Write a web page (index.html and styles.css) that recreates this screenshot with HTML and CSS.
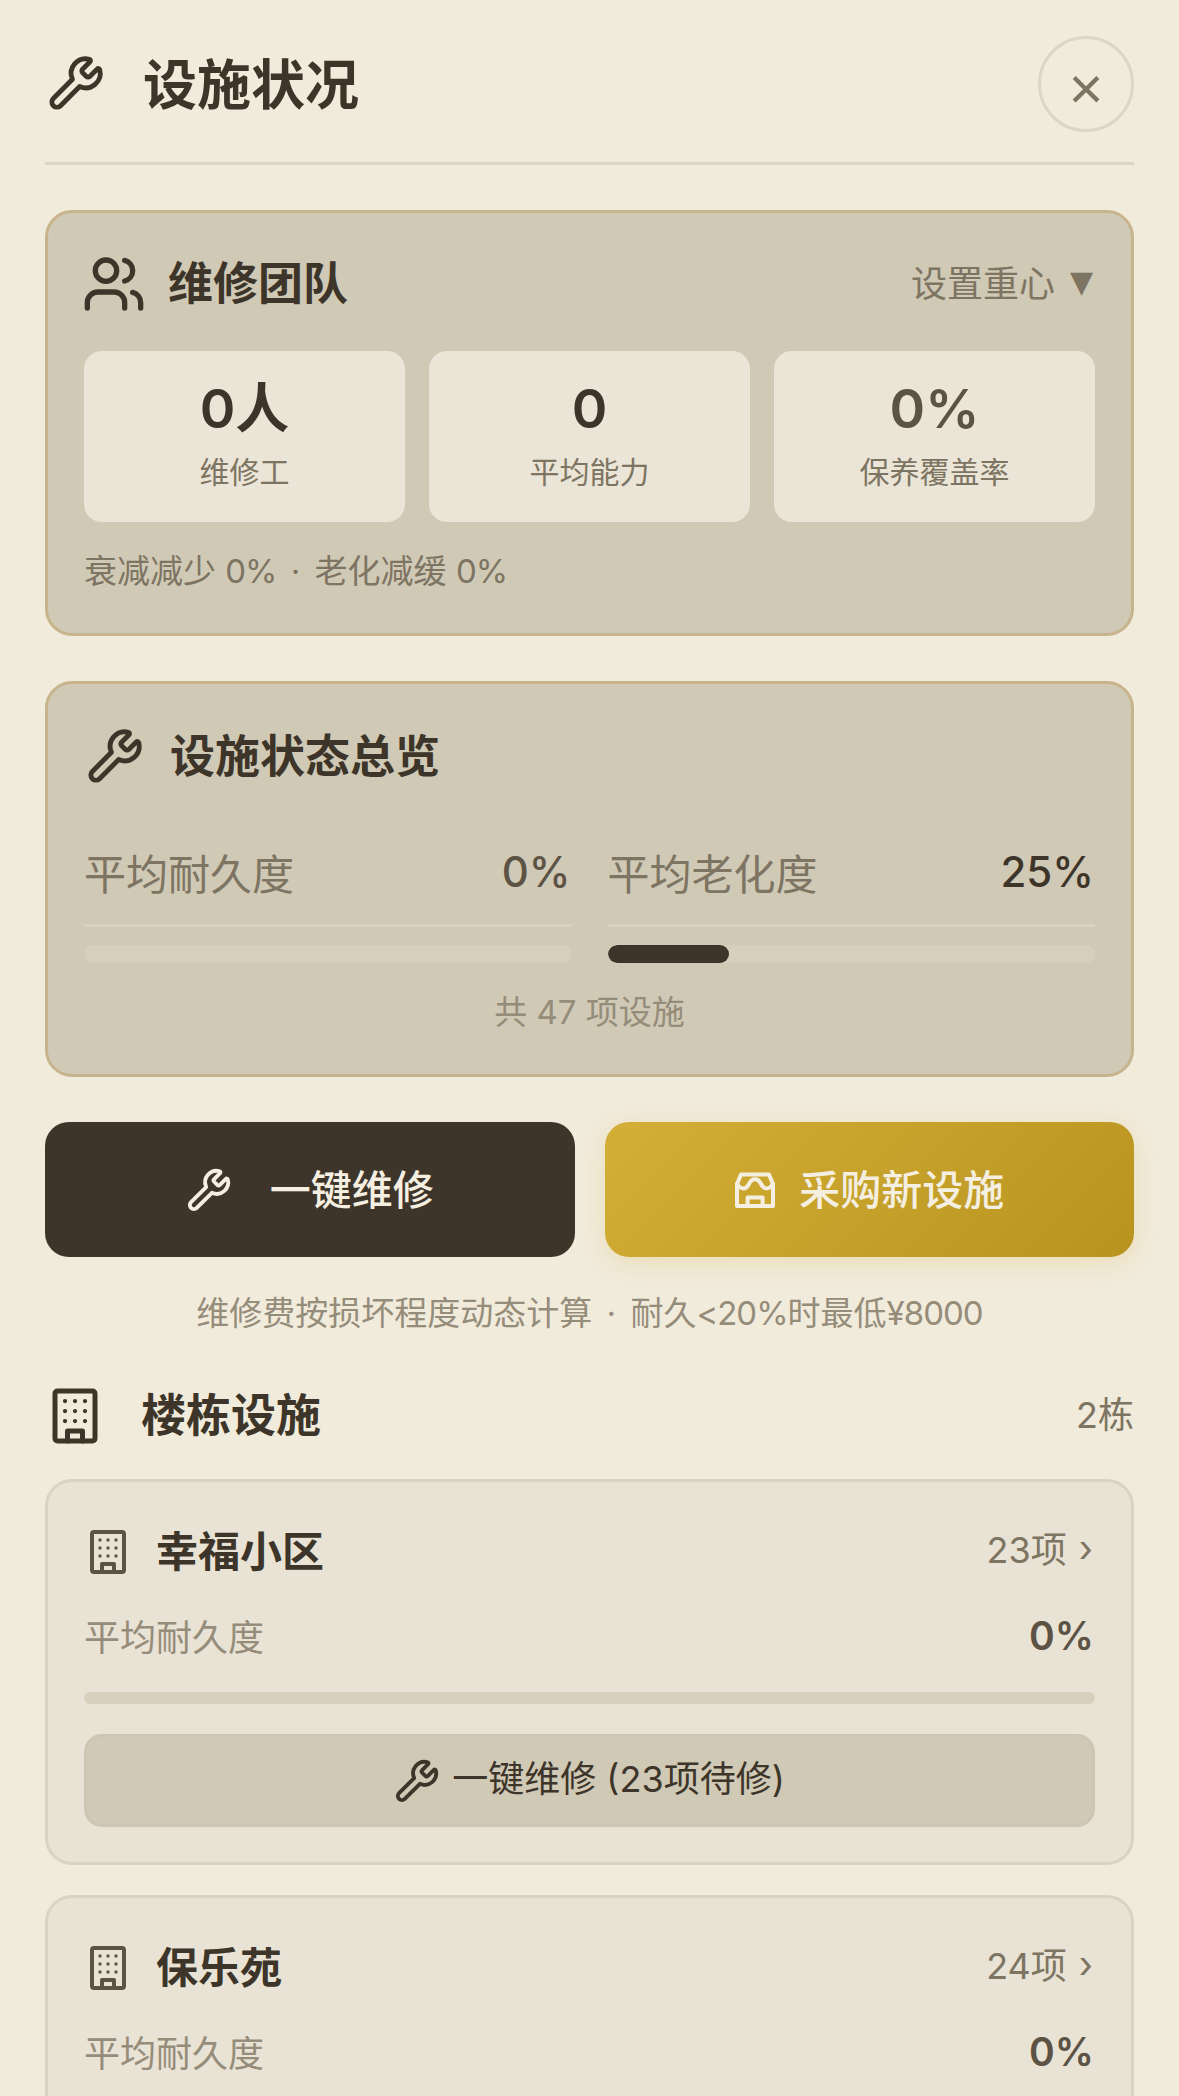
FILE: index.html
```html
<!DOCTYPE html>
<html lang="zh">
<head>
<meta charset="utf-8">
<title>设施状况</title>
<link rel="stylesheet" href="styles.css">
</head>
<body>
<svg class="defs" width="0" height="0">
  <symbol id="wrench" viewBox="0 0 24 24"><path d="M14.7 6.3a1 1 0 0 0 0 1.4l1.6 1.6a1 1 0 0 0 1.4 0l3.106-3.105c.32-.322.863-.22.983.218a6 6 0 0 1-8.259 7.057l-7.91 7.91a1 1 0 0 1-2.999-3l7.91-7.91a6 6 0 0 1 7.057-8.259c.438.12.54.662.219.984z"/></symbol>
  <symbol id="users" viewBox="0 0 24 24"><path d="M16 21v-2a4 4 0 0 0-4-4H6a4 4 0 0 0-4 4v2"/><circle cx="9" cy="7" r="4"/><path d="M22 21v-2a4 4 0 0 0-3-3.870"/><path d="M16 3.130a4 4 0 0 1 0 7.750"/></symbol>
  <symbol id="building" viewBox="0 0 24 24"><rect x="4" y="2" width="16" height="20" rx="1"/><path d="M9 22v-4h6v4"/><path class="dots" d="M8 6h.01M16 6h.01M12 6h.01M12 10h.01M12 14h.01M16 10h.01M16 14h.01M8 10h.01M8 14h.01"/></symbol>
  <symbol id="store" viewBox="0 0 24 24"><path d="M5 4.200H19L21 9V20H3V9Z"/><path d="M3 9C5 12 7.500 12 9 9C10 6.800 11 6.600 12 6.600C13 6.600 14 6.800 15 9C16.500 12 19 12 21 9"/><path d="M8.300 20V15.800H15.800V20"/></symbol>
</svg>
<main class="page">
  <header class="top">
    <div class="top-left">
      <svg class="ic ic-top"><use href="#wrench"/></svg>
      <h1 class="top-title">设施状况</h1>
    </div>
    <button class="close">×</button>
  </header>

  <section class="panel team">
    <div class="panel-head">
      <div class="panel-title">
        <svg class="ic ic-users"><use href="#users"/></svg>
        <span>维修团队</span>
      </div>
      <div class="focus">设置重心<span class="tri">▼</span></div>
    </div>
    <div class="stats">
      <div class="stat"><div class="stat-val">0人</div><div class="stat-lab">维修工</div></div>
      <div class="stat"><div class="stat-val">0</div><div class="stat-lab">平均能力</div></div>
      <div class="stat"><div class="stat-val muted-val">0%</div><div class="stat-lab">保养覆盖率</div></div>
    </div>
    <div class="team-note">衰减减少 <span class="lat">0%</span> <span class="dot">·</span> 老化减缓 <span class="lat">0%</span></div>
  </section>

  <section class="panel overview">
    <div class="panel-title">
      <svg class="ic ic-ov"><use href="#wrench"/></svg>
      <span>设施状态总览</span>
    </div>
    <div class="gauges">
      <div class="gauge">
        <div class="gauge-row"><span class="gauge-lab">平均耐久度</span><span class="gauge-val dim">0%</span></div>
        <div class="track"><div class="fill" style="width:0%"></div></div>
      </div>
      <div class="gauge">
        <div class="gauge-row"><span class="gauge-lab">平均老化度</span><span class="gauge-val">25%</span></div>
        <div class="track"><div class="fill" style="width:25%"></div></div>
      </div>
    </div>
    <div class="total">共 47 项设施</div>
  </section>

  <div class="actions">
    <button class="act act-dark"><svg class="ic ic-act1"><use href="#wrench"/></svg><span class="act-text">一键维修</span></button>
    <button class="act act-gold"><svg class="ic ic-act2"><use href="#store"/></svg><span class="act-text">采购新设施</span></button>
  </div>
  <p class="hint">维修费按损坏程度动态计算 <span class="dot">·</span> 耐久<span class="lat">&lt;20%</span>时最低<span class="lat">¥8000</span></p>

  <div class="sec-head">
    <div class="sec-title">
      <svg class="ic ic-sec"><use href="#building"/></svg>
      <h2>楼栋设施</h2>
    </div>
    <span class="sec-count">2栋</span>
  </div>

  <section class="bcard">
    <div class="bcard-head">
      <div class="bcard-title"><svg class="ic ic-b"><use href="#building"/></svg><span>幸福小区</span></div>
      <div class="bcard-count">23项<span class="chev">›</span></div>
    </div>
    <div class="bcard-row"><span>平均耐久度</span><strong>0%</strong></div>
    <div class="mini-track"></div>
    <button class="repair"><svg class="ic ic-r"><use href="#wrench"/></svg><span class="repair-text">一键维修 (23项待修)</span></button>
  </section>

  <section class="bcard">
    <div class="bcard-head">
      <div class="bcard-title"><svg class="ic ic-b"><use href="#building"/></svg><span>保乐苑</span></div>
      <div class="bcard-count">24项<span class="chev">›</span></div>
    </div>
    <div class="bcard-row"><span>平均耐久度</span><strong>0%</strong></div>
  </section>
</main>
</body>
</html>
```
FILE: styles.css
```css
* { box-sizing: border-box; }
html, body { margin: 0; height: 2096px; overflow: hidden; }
body { background: #f1ebdc; color: #3d3529; font-family: Inter, "Noto Sans CJK SC", sans-serif; }
.defs { display: block; }
button { font-family: inherit; padding: 0; }
h1, h2, p { margin: 0; }
.ic { display: block; flex: none; fill: none; stroke: currentColor; stroke-linecap: round; stroke-linejoin: round; stroke-width: 2; }
.dots { stroke-width: 1.7; }
.dot { margin: 0 5px; }
.lat { letter-spacing: -.03em; }
.page { padding: 36px 45px 0; }

.top { height: 129px; border-bottom: 3px solid #dcd6c7; display: flex; justify-content: space-between; align-items: flex-start; }
.top-left { display: flex; align-items: center; gap: 38px; height: 96px; padding-left: 2px; }
.ic-top { width: 58px; height: 58px; margin-bottom: 2px; }
.top-title { font-size: 54px; line-height: 60px; font-weight: 700; margin-top: 4px; }
.close { width: 96px; height: 96px; border-radius: 50%; border: 3px solid #dcd6c7; background: transparent; color: #7d7462; font-size: 60px; line-height: 96px; padding-top: 2px; font-family: "Liberation Sans", sans-serif; }

.panel { background: #d0c9b6; border: 3px solid #c8b48c; border-radius: 27px; }
.team { margin-top: 45px; height: 426px; padding: 36px 36px 0; }
.panel-head { display: flex; justify-content: space-between; align-items: center; height: 70px; }
.panel-title { display: flex; align-items: center; gap: 24px; font-size: 45px; font-weight: 700; line-height: 60px; }
.ic-users { width: 64px; height: 64px; margin-left: -2px; margin-right: -2px; }
.focus { font-size: 36px; color: #7d7462; display: flex; align-items: center; gap: 15px; padding: 0 2px 6px 0; }
.tri { font-size: 30px; font-family: "DejaVu Sans", sans-serif; }

.stats { display: grid; grid-template-columns: repeat(3, 1fr); gap: 24px; margin-top: 32px; }
.stat { background: #ebe5d7; border-radius: 18px; height: 171px; display: flex; flex-direction: column; align-items: center; padding-top: 25px; }
.stat-val { font-size: 54px; line-height: 66px; font-weight: 600; }
.muted-val { color: #5c5344; }
.stat-lab { font-size: 30px; line-height: 42px; color: #7d7462; margin-top: 9px; }
.team-note { margin-top: 28px; font-size: 33px; line-height: 42px; color: #7d7462; }

.overview { margin-top: 45px; height: 396px; padding: 43px 36px 0 36px; }
.overview .panel-title { gap: 26px; padding-left: 2px; }
.ic-ov { width: 58px; height: 58px; margin-bottom: 2px; }
.gauges { display: grid; grid-template-columns: 1fr 1fr; gap: 36px; margin-top: 37px; }
.gauge-row { display: flex; justify-content: space-between; align-items: center; height: 103px; border-bottom: 3px solid #d9d2bf; padding: 0 1px 6px 0; }
.gauge-lab { font-size: 42px; color: #7d7462; }
.gauge-val { font-size: 42px; font-weight: 500; color: #3d3529; }
.gauge-val.dim { color: #5c5344; }
.track { height: 18px; border-radius: 9px; background: #d7cfbc; margin-top: 18px; overflow: hidden; }
.fill { height: 100%; background: #3d3529; border-radius: 9px; }
.total { margin-top: 28px; text-align: center; font-size: 33px; line-height: 42px; color: #958c7a; }

.actions { display: grid; grid-template-columns: 1fr 1fr; gap: 30px; margin-top: 45px; }
.act { height: 135px; border: 0; border-radius: 24px; display: flex; align-items: center; justify-content: center; font-size: 41px; font-weight: 500; color: #f5efe1; }
.act-text { padding-bottom: 6px; }
.act-dark { background: #3d3529; gap: 38px; }
.act-gold { background: linear-gradient(135deg, #d4af37, #b8941f); gap: 20px; padding-right: 3px; box-shadow: 0 6px 24px rgba(212, 175, 55, .22); }
.ic-act1 { width: 46px; height: 46px; }
.ic-act2 { width: 48px; height: 48px; }
.hint { margin-top: 35px; text-align: center; font-size: 33px; line-height: 42px; color: #958c7a; }

.sec-head { display: flex; justify-content: space-between; align-items: center; margin-top: 46px; height: 72px; }
.sec-title { display: flex; align-items: center; gap: 36px; }
.ic-sec { width: 60px; height: 60px; }
.sec-title h2 { font-size: 45px; line-height: 60px; font-weight: 700; }
.sec-count { font-size: 36px; color: #7d7462; padding-bottom: 8px; }

.bcard { background: #e9e3d5; border: 3px solid #d9d3c4; border-radius: 27px; padding: 36px 36px 36px; margin-bottom: 30px; height: 386px; }
.sec-head + .bcard { margin-top: 27px; }
.bcard-head { display: flex; justify-content: space-between; align-items: center; height: 60px; }
.bcard-title { display: flex; align-items: center; gap: 24px; font-size: 42px; font-weight: 700; }
.ic-b { width: 48px; height: 48px; color: #5c5344; margin-top: 8px; }
.bcard-count { font-size: 36px; color: #7d7462; display: flex; align-items: center; gap: 12px; padding: 0 2px 2px 0; }
.chev { font-size: 37px; padding-top: 3px; }
.bcard-row { display: flex; justify-content: space-between; align-items: center; height: 60px; margin-top: 27px; font-size: 36px; color: #958c7a; padding-right: 1px; }
.bcard-row strong { font-size: 39px; font-weight: 600; color: #5c5344; }
.mini-track { height: 12px; border-radius: 6px; background: #d8d0bd; margin-top: 27px; }
.repair { margin-top: 30px; width: 100%; height: 93px; border: 3px solid #cdc6b4; border-radius: 18px; background: #d0c9b6; display: flex; align-items: center; justify-content: center; gap: 12px; font-size: 36px; color: #3d3529; }
.repair-text { padding-bottom: 10px; }
.ic-r { width: 46px; height: 46px; }
```
